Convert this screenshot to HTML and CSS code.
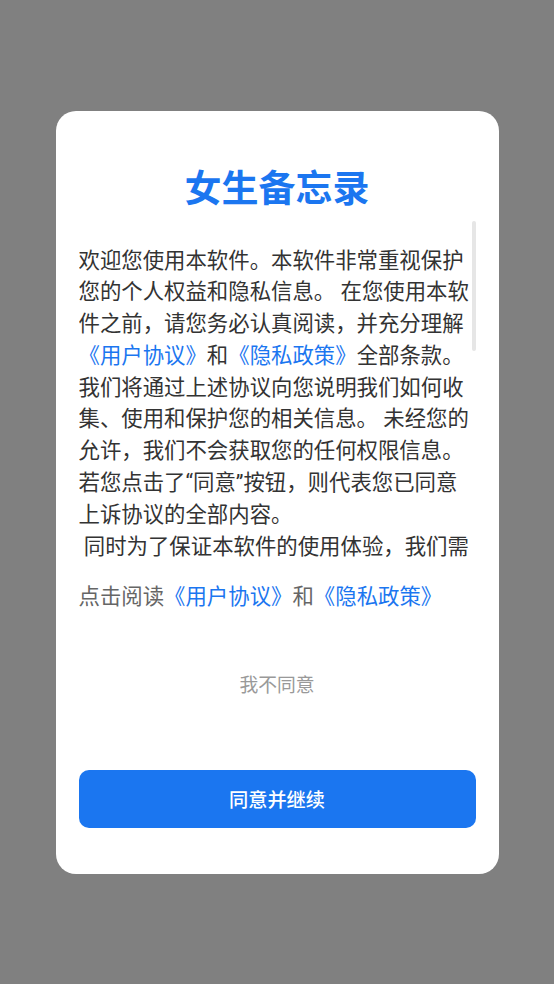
FILE: index.html
```html
<!DOCTYPE html>
<html lang="zh-CN">
<head>
<meta charset="utf-8">
<title>女生备忘录</title>
<link rel="stylesheet" href="styles.css">
</head>
<body>
<div class="overlay">
  <div class="dialog">
    <h1 class="title">女生备忘录</h1>
    <div class="scroll-wrap">
      <div class="scroll">
        <p class="body-text">欢迎您使用本软件。本软件非常重视保护您的个人权益和隐私信息。 在您使用本软件之前，请您务必认真阅读，并充分理解<span class="link">《用户协议》</span>和<span class="link">《隐私政策》</span>全部条款。我们将通过上述协议向您说明我们如何收集、使用和保护您的相关信息。 未经您的允许，我们不会获取您的任何权限信息。若您点击了“同意”按钮，则代表您已同意上诉协议的全部内容。<br>&nbsp;同时为了保证本软件的使用体验，我们需</p>
      </div>
      <div class="thumb"></div>
    </div>
    <p class="read-line">点击阅读<span class="link">《用户协议》</span>和<span class="link">《隐私政策》</span></p>
    <div class="disagree">我不同意</div>
    <button class="agree">同意并继续</button>
  </div>
</div>
</body>
</html>
```

FILE: styles.css
```css
html, body {
  margin: 0;
  padding: 0;
}
body {
  width: 554px;
  height: 984px;
  background: #808080;
  font-family: Roboto, "Noto Sans CJK SC", sans-serif;
  overflow: hidden;
}
.overlay {
  height: 984px;
  display: flex;
  align-items: center;
  justify-content: center;
}
.dialog {
  width: 443px;
  height: 763px;
  box-sizing: border-box;
  background: #ffffff;
  border-radius: 20px;
  padding: 55px 23px 0 23px;
  display: flex;
  flex-direction: column;
}
.title {
  margin: 0;
  height: 48px;
  line-height: 48px;
  text-align: center;
  font-size: 37px;
  font-weight: 700;
  color: #1b76f0;
}
.scroll-wrap {
  position: relative;
  margin-top: 7px;
  height: 342px;
}
.scroll {
  height: 342px;
  overflow: hidden;
  padding-right: 4px;
}
.body-text {
  margin: 0;
  padding-top: 24px;
  font-size: 21.4px;
  line-height: 31.8px;
  color: #333333;
  word-break: break-all;
}
.link {
  color: #1b76f0;
}
.thumb {
  position: absolute;
  top: 0;
  right: 0;
  width: 4px;
  height: 130px;
  border-radius: 2px;
  background: #e6e6e6;
}
.read-line {
  margin: 18px 0 0 0;
  font-size: 21.4px;
  line-height: 32px;
  color: #666666;
  white-space: nowrap;
}
.disagree {
  margin-top: 49px;
  height: 48px;
  line-height: 48px;
  text-align: center;
  font-size: 18.8px;
  color: #999999;
}
.agree {
  margin-top: 60px;
  height: 58px;
  width: 100%;
  border: none;
  border-radius: 10px;
  background: #1b76f0;
  color: #ffffff;
  font-family: Roboto, "Noto Sans CJK SC", sans-serif;
  font-size: 19.2px;
  font-weight: 500;
  padding: 0;
}
```
